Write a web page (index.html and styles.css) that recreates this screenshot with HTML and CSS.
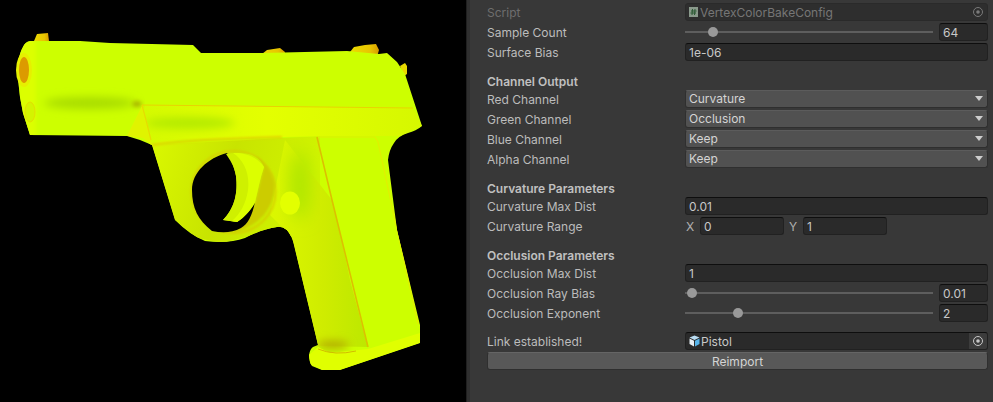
FILE: index.html
```html
<!DOCTYPE html>
<html lang="en">
<head>
<meta charset="utf-8">
<title>VertexColorBakeConfig</title>
<link rel="stylesheet" href="styles.css">
</head>
<body>
<main class="app">
  <section class="viewport">
    <svg class="gun" viewBox="0 0 467 402" width="467" height="402" aria-label="Pistol preview">
      <defs>
        <path id="sil" d="M18 62 Q20 52 23 47 Q25 42 30 41 L80 41 L110 43 L193 45 L201 53 L262 53 L347 51 L379 54 L387 53 L397 62 L405 74 L420 120 L422 126 Q416 131 408 133 Q398 136 394 143 Q389 150 388 160 L397 230 L420 325 L420 343 L340 370 L322 370 L312 366 Q309 362 309 355 Q310 349 313 347 L318 345 L294 245 Q292 236 287 230 Q282 226 277 227 Q262 229 245 238 Q228 244 205 241 Q190 235 175 220 L152 145 L140 140 L127 136 L30 135 L23 113 L20 97 L17 70 Z"/>
        <clipPath id="body"><use href="#sil"/></clipPath>
        <linearGradient id="strap" x1="0" x2="1" y1="0" y2="0.2"><stop offset="0" stop-color="#daf800"/><stop offset="0.5" stop-color="#c8e400"/><stop offset="1" stop-color="#d0f400"/></linearGradient>
        <linearGradient id="grip" x1="0" x2="1" y1="0" y2="0"><stop offset="0" stop-color="#dcf800"/><stop offset="0.55" stop-color="#cfec00"/><stop offset="1" stop-color="#bce800"/></linearGradient>
        <linearGradient id="sight" x1="0" x2="1" y1="0" y2="0"><stop offset="0" stop-color="#ecdc00"/><stop offset="0.7" stop-color="#e8c400"/><stop offset="1" stop-color="#d89c00"/></linearGradient>
        <linearGradient id="band" x1="0" x2="1" y1="0" y2="0"><stop offset="0" stop-color="#d4fa00"/><stop offset="0.45" stop-color="#e4ff00"/><stop offset="1" stop-color="#d6f800"/></linearGradient>
        <filter id="b1" x="-30%" y="-50%" width="160%" height="200%"><feGaussianBlur stdDeviation="1"/></filter>
        <filter id="b2" x="-30%" y="-100%" width="160%" height="300%"><feGaussianBlur stdDeviation="2"/></filter>
        <filter id="b5" x="-30%" y="-150%" width="160%" height="400%"><feGaussianBlur stdDeviation="4"/></filter>
        <filter id="b9" x="-60%" y="-60%" width="220%" height="220%"><feGaussianBlur stdDeviation="9"/></filter>
      </defs>
      <path d="M34 41 L37 34 L48 33 L49 41 Z" fill="url(#sight)"/>
      <path d="M262 54 L267 50 L280 48 L285 52 L284 58 Z" fill="url(#sight)"/>
      <path d="M350 52 L354 47 L365 45 L376 44 L379 50 L377 57 Z" fill="url(#sight)"/>
      <path d="M400 66 L405 63 L407 66 L407 74 L404 76 Z" fill="#e8d800"/>
      <use href="#sil" fill="#cdff00"/>
      <g clip-path="url(#body)">
        <path d="M152 145 L320 136 L320 230 L292 237 L260 233 L223 243 L197 238 L175 220 Z" fill="url(#strap)"/>
        <path d="M285 140 L332 200 L368 347 L318 346 L292 237 L270 215 Z" fill="url(#grip)"/>
        <ellipse cx="300" cy="185" rx="9" ry="34" fill="#a8e400" filter="url(#b9)"/>
        <ellipse cx="333" cy="345" rx="16" ry="4" fill="#b0a800" filter="url(#b5)"/>
        <path d="M140 105 L413 108 L422 126 L400 136 L330 136 L282 137 L180 140 L150 146 L140 125 Z" fill="url(#band)"/>
        <ellipse cx="190" cy="123" rx="45" ry="6" fill="#b4ea00" filter="url(#b5)"/>
        <ellipse cx="90" cy="103" rx="46" ry="6" fill="#a8dc00" filter="url(#b5)"/>
        <ellipse cx="137" cy="104" rx="5" ry="3" fill="#a8b400" filter="url(#b2)"/>
        <path d="M18 40 H36 V140 H18 Z" fill="#dcff00" filter="url(#b2)"/>
        <path d="M127 136 L143 138 L152 145 L147 122 L142 106 Z" fill="#e0f400"/>
        <path d="M142 105 L413 108" stroke="#e8d400" stroke-width="1.2" fill="none"/>
        <path d="M142 105 L146 120 L151 140" stroke="#e6dc00" stroke-width="1.2" fill="none"/>
        <path d="M152 145 Q180 140 282 137" stroke="#e0d000" stroke-width="2" fill="none" filter="url(#b1)"/>
        <path d="M320 137 H375 L378 142 L397 230 L420 330 L368 348 L350 280 Z" fill="#cdff00"/>
        <path d="M317 137 H375 L378 142 L397 230 L418 324" stroke="#e0f000" stroke-width="1.2" fill="none"/>
        <path d="M317 137 L332 200 L368 347" stroke="#dcc000" stroke-width="1.6" fill="none"/>
        <path d="M309 355 L318 347 L330 353 L368 349 L420 333 L420 343 L340 370 L322 370 L310 364 Z" fill="#e0ff00"/>
        <path d="M318 349 Q335 356 356 351" stroke="#d0bc00" stroke-width="1" fill="none"/>
        <ellipse cx="290" cy="203" rx="10" ry="11.5" fill="#e3ff00"/>
        <ellipse cx="233.5" cy="192" rx="42" ry="41" fill="none" stroke="#d4d000" stroke-width="2" filter="url(#b1)"/>
        <path d="M255 155 Q270 165 274 182 Q276 200 264 215 Q252 228 232 233 L240 226 L255 203 L264 167 Z" fill="#cccc00" filter="url(#b1)"/>
      </g>
      <path d="M227 153 C208 158 192 172 192 190 C192 208 198 220 212 231 C222 233 232 233 241 228 C248 224 252 216 255 202 L237 222 L223 220 C235 208 238 192 236 176 C234 165 230 158 227 153 Z" fill="#000"/>
      <path d="M226 154 C232 153 244 152 252 155 C258 158 262 162 264 167 C260 178 258 190 255 203 C250 211 244 218 237 222 L223 220 C235 208 238 192 236 176 C234 165 230 160 226 154 Z" fill="#cff000"/>
      <path d="M233 153 C244 160 250 174 248 190 C246 204 240 214 232 221 L237 222 C246 216 252 208 255 202 C258 190 260 178 264 167 C258 158 246 152 233 153 Z" fill="#dcff00"/>
      <ellipse cx="24" cy="70" rx="8" ry="17" fill="#e6f000"/>
      <ellipse cx="24" cy="70" rx="5" ry="13" fill="#dc9a00"/>
      <ellipse cx="30" cy="112" rx="5" ry="10" fill="#d4f400" stroke="#e2e000"/>
    </svg>
  </section>
  <section class="inspector">
    <div class="row disabled">
      <span class="label">Script</span>
      <div class="field object">
        <svg class="icon" viewBox="0 0 9 10" width="9" height="10"><rect width="9" height="10" fill="#8a9a8c"/><path d="M3.5 2L3 8M6 2L5.5 8M2 4H7.5M1.5 6H7" stroke="#2c5a34" stroke-width="1"/></svg>
        <span class="grow">VertexColorBakeConfig</span>
        <span class="picker"><svg viewBox="0 0 12 12" width="12" height="12"><circle cx="6" cy="6" r="4.5" fill="none" stroke="currentColor"/><circle cx="6" cy="6" r="1.8" fill="currentColor"/></svg></span>
      </div>
    </div>
    <div class="row">
      <span class="label">Sample Count</span>
      <div class="slider">
        <div class="track"><i class="thumb" style="left:28px"></i></div>
        <div class="field num">64</div>
      </div>
    </div>
    <div class="row">
      <span class="label">Surface Bias</span>
      <div class="field">1e-06</div>
    </div>

    <h2 class="head">Channel Output</h2>
    <div class="row"><span class="label">Red Channel</span><div class="select">Curvature</div></div>
    <div class="row"><span class="label">Green Channel</span><div class="select">Occlusion</div></div>
    <div class="row"><span class="label">Blue Channel</span><div class="select">Keep</div></div>
    <div class="row"><span class="label">Alpha Channel</span><div class="select">Keep</div></div>

    <h2 class="head">Curvature Parameters</h2>
    <div class="row"><span class="label">Curvature Max Dist</span><div class="field">0.01</div></div>
    <div class="row">
      <span class="label">Curvature Range</span>
      <div class="vector">
        <span class="axis">X</span><div class="field comp">0</div>
        <span class="axis">Y</span><div class="field comp">1</div>
      </div>
    </div>

    <h2 class="head">Occlusion Parameters</h2>
    <div class="row"><span class="label">Occlusion Max Dist</span><div class="field">1</div></div>
    <div class="row">
      <span class="label">Occlusion Ray Bias</span>
      <div class="slider">
        <div class="track"><i class="thumb" style="left:7px"></i></div>
        <div class="field num">0.01</div>
      </div>
    </div>
    <div class="row">
      <span class="label">Occlusion Exponent</span>
      <div class="slider">
        <div class="track"><i class="thumb" style="left:53px"></i></div>
        <div class="field num">2</div>
      </div>
    </div>

    <div class="row link">
      <span class="label">Link established!</span>
      <div class="field object">
        <svg class="icon" viewBox="0 0 11 12" width="11" height="12"><path d="M5.5 .5L10.5 2.5L5.5 5L.5 2.5Z" fill="#b9dcf2"/><path d="M.5 3.5L5 5.8V11.5L.5 9Z" fill="#e6eef4"/><path d="M6 5.8L10.5 3.5V9L6 11.5Z" fill="#57b4ea"/></svg>
        <span class="grow pistol">Pistol</span>
        <span class="picker boxed"><svg viewBox="0 0 12 12" width="12" height="12"><circle cx="6" cy="6" r="4.5" fill="none" stroke="currentColor"/><circle cx="6" cy="6" r="1.8" fill="currentColor"/></svg></span>
      </div>
    </div>
    <button class="button" type="button">Reimport</button>
  </section>
</main>
</body>
</html>
```
FILE: styles.css
```css
* { box-sizing: border-box; }
html, body { margin: 0; height: 100%; overflow: hidden; }
body {
  background: #383838;
  color: #bcbcbc;
  font: 12px/18px Inter, "Liberation Sans", sans-serif;
}
.app { display: flex; width: 993px; height: 402px; }
.viewport { flex: 0 0 466px; background: #000; overflow: hidden; }
.gun { display: block; }
.inspector {
  flex: 1;
  padding: 3px 5px 0 20px;
  border-left: 1px solid #1f1f1f;
  box-shadow: inset 3px 0 0 #2f2f2f;
  background: #383838;
  min-width: 0;
}
.row { display: flex; height: 18px; margin-top: 2px; }
.row:first-child { margin-top: 0; }
.head {
  margin: 11px 0 0;
  height: 18px;
  padding-top: 1px;
  font-size: 12px;
  line-height: 18px;
  font-weight: 600;
  color: #c0c0c0;
}
.head + .row { margin-top: 0; }
.label { flex: 0 0 198px; padding-top: 1px; white-space: nowrap; }
.field {
  flex: 1;
  min-width: 0;
  height: 18px;
  padding: 0 3px;
  background: #2a2a2a;
  border: 1px solid #212121;
  border-top-color: #0e0e0e;
  border-radius: 3px;
  color: #c8c8c8;
  line-height: 17px;
}
.object { display: flex; align-items: center; padding: 0 0 0 3px; }
.object .grow { flex: 1; margin-left: 2px; }
.object .pistol { margin-left: 1px; }
.icon { flex: none; }
.picker {
  flex: none;
  width: 18px;
  height: 16px;
  display: flex;
  align-items: center;
  justify-content: center;
  color: #b0b0b0;
}
.boxed { background: #3c3c3c; border-radius: 0 2px 2px 0; color: #c8c8c8; }
.disabled .label { color: #6e6e6e; }
.disabled .field { background: #2e2e2e; border-color: #2a2a2a; color: #767676; }
.disabled .picker { color: #7a7a7a; }
.slider { flex: 1; display: flex; gap: 6px; min-width: 0; }
.track {
  flex: 1;
  position: relative;
  align-self: center;
  height: 2px;
  background: #5e5e5e;
}
.thumb {
  position: absolute;
  top: -4px;
  width: 10px;
  height: 10px;
  margin-left: -5px;
  border-radius: 50%;
  background: #999;
}
.num { flex: 0 0 49px; }
.select {
  flex: 1;
  height: 18px;
  padding: 0 3px;
  background: #515151;
  border: 1px solid #2f2f2f;
  border-top-color: #5c5c5c;
  border-radius: 3px;
  color: #d4d4d4;
  line-height: 15px;
  position: relative;
}
.select::after {
  content: "";
  position: absolute;
  right: 4px;
  top: 5px;
  border-left: 4px solid transparent;
  border-right: 4px solid transparent;
  border-top: 5px solid #cdcdcd;
}
.vector { flex: 1; display: flex; }
.axis { flex: none; width: 15px; color: #b0b0b0; padding: 1px 0 0 1px; }
.comp { flex: 0 0 84px; margin-right: 4px; }
.link { margin-top: 10px; }
.button {
  display: block;
  width: 100%;
  height: 18px;
  margin-top: 2px;
  padding: 0;
  background: #585858;
  border: 1px solid #2f2f2f;
  border-top-color: #656565;
  border-radius: 3px;
  color: #d4d4d4;
  font: inherit;
  line-height: 15px;
}
```
